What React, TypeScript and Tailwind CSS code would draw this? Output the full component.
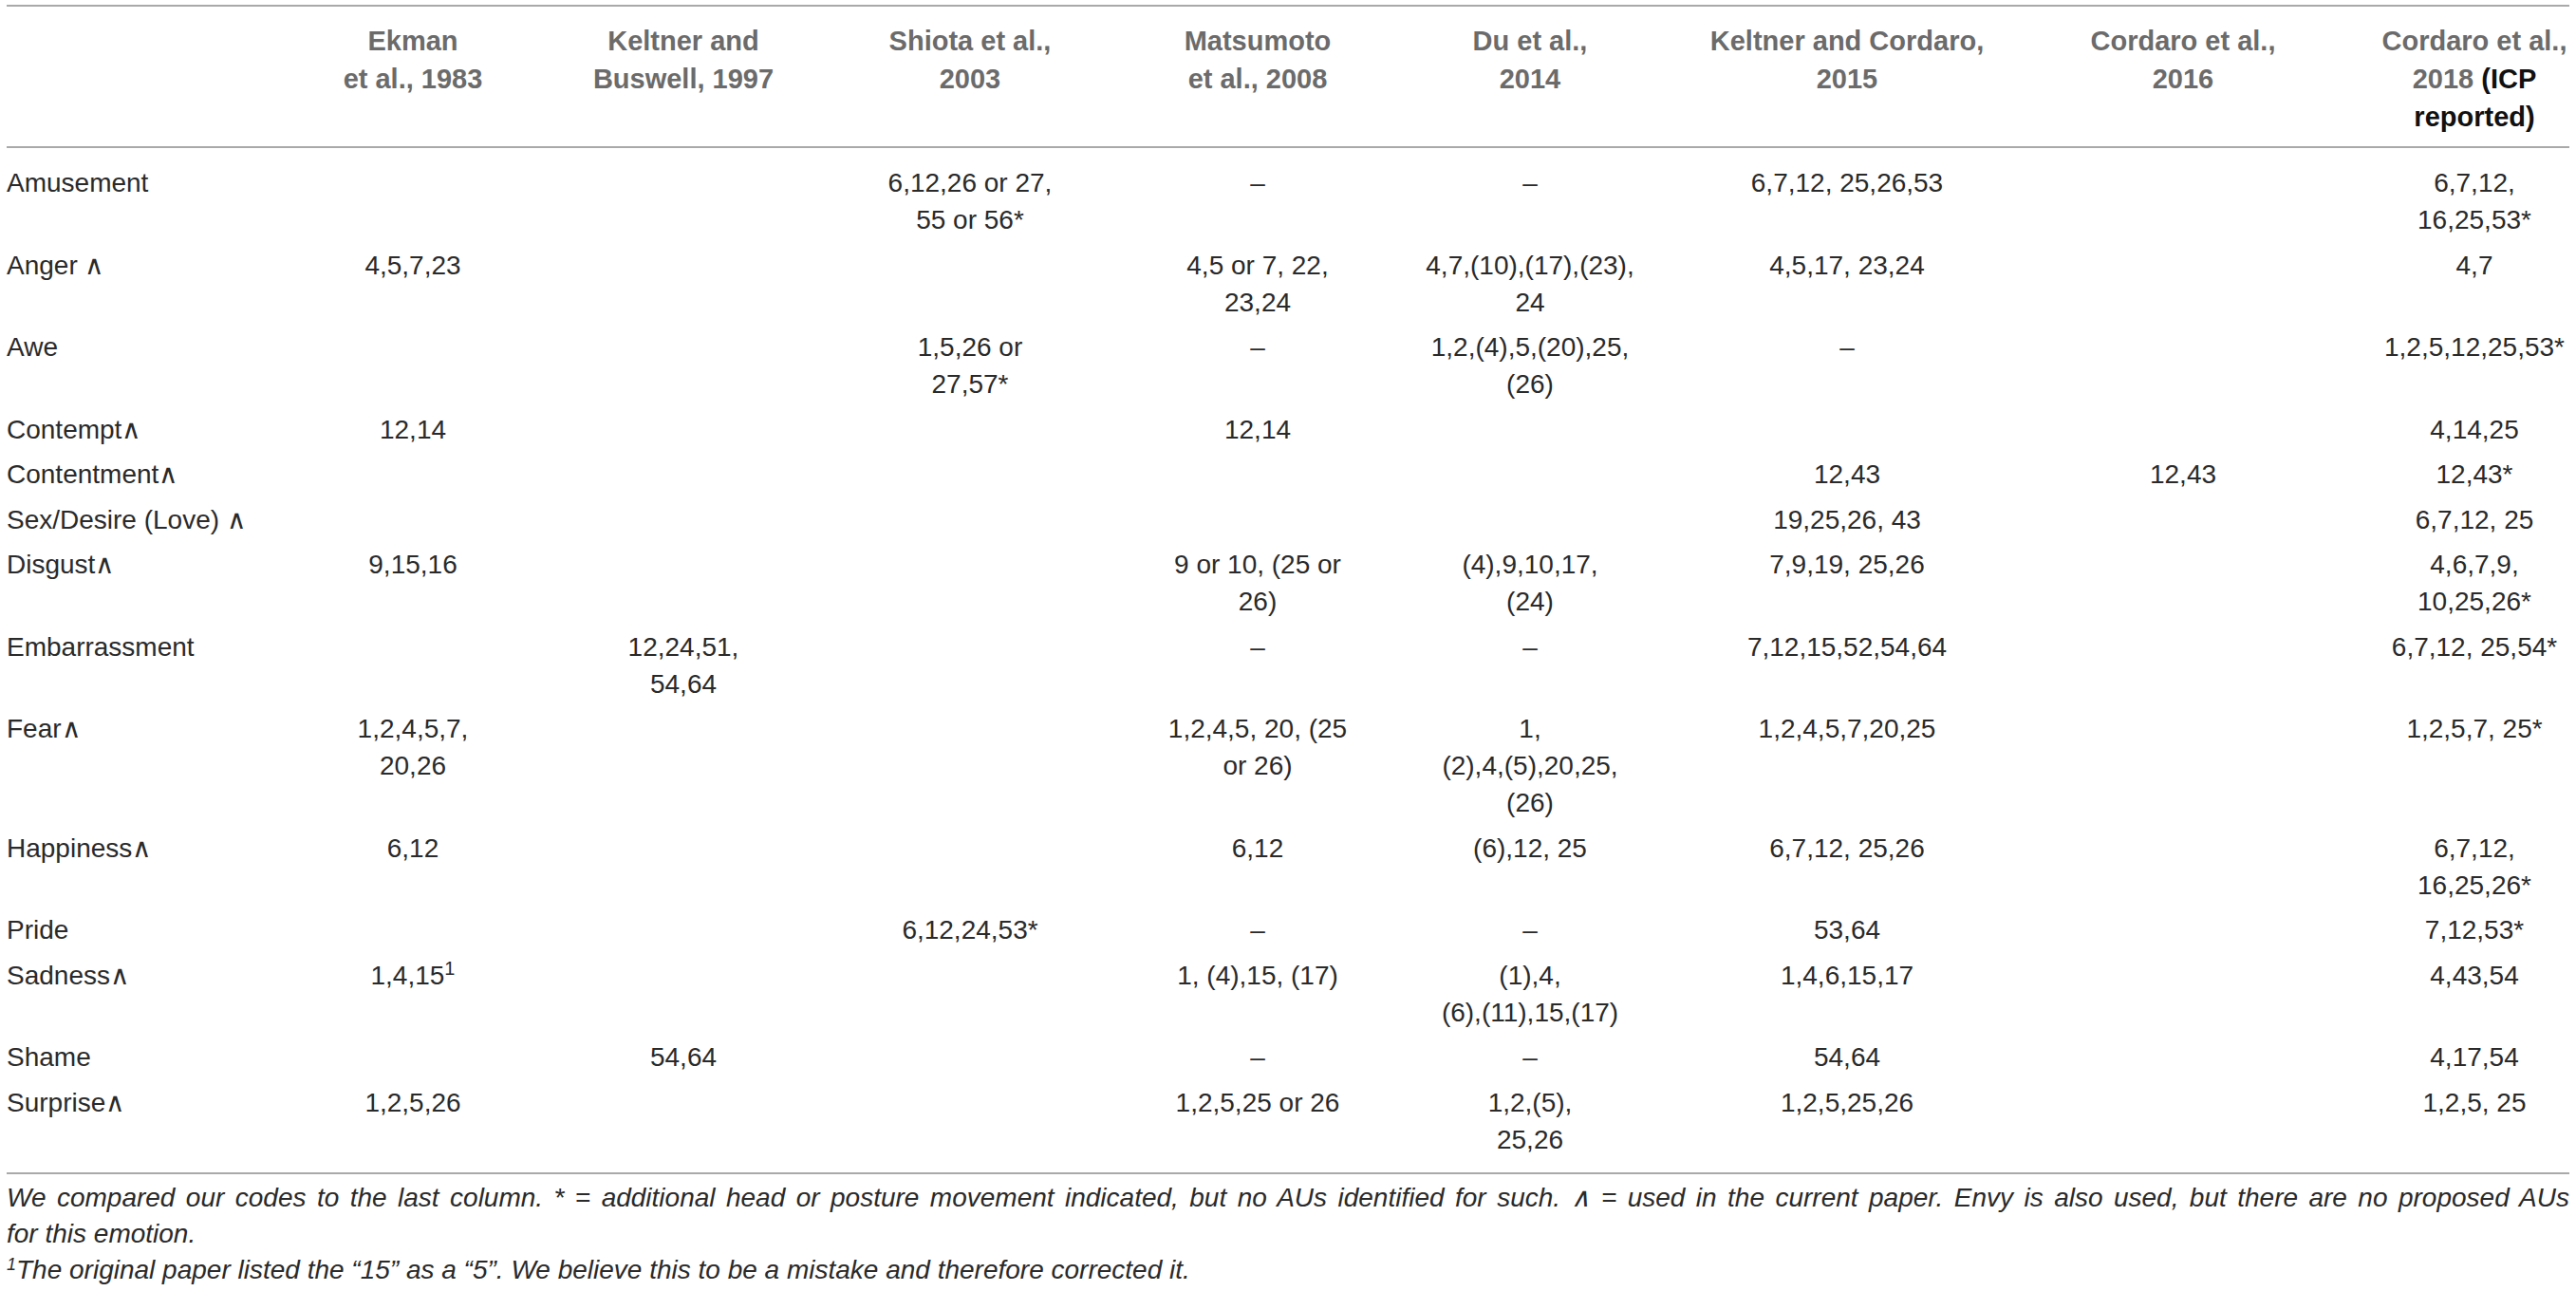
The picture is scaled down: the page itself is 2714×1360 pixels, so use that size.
import React from "react";

const grid =
  "grid grid-cols-[242px_372px_198px_406px_200px_374px_294px_414px_200px]";

const headers: React.ReactNode[][] = [
  ["Ekman", "et al., 1983"],
  ["Keltner and", "Buswell, 1997"],
  ["Shiota et al.,", "2003"],
  ["Matsumoto", "et al., 2008"],
  ["Du et al.,", "2014"],
  ["Keltner and Cordaro,", "2015"],
  ["Cordaro et al.,", "2016"],
  [
    "Cordaro et al.,",
    <>
      2018 <span className="text-[#111]">(ICP</span>
    </>,
    <span className="text-[#111]">reported)</span>,
  ],
];

// "\n" breaks a cell into lines, "^1" marks a superscript
const rows: { label: string; cells: string[] }[] = [
  {
    label: "Amusement",
    cells: ["", "", "6,12,26 or 27,\n55 or 56*", "–", "–", "6,7,12, 25,26,53", "", "6,7,12,\n16,25,53*"],
  },
  {
    label: "Anger ∧",
    cells: ["4,5,7,23", "", "", "4,5 or 7, 22,\n23,24", "4,7,(10),(17),(23),\n24", "4,5,17, 23,24", "", "4,7"],
  },
  {
    label: "Awe",
    cells: ["", "", "1,5,26 or\n27,57*", "–", "1,2,(4),5,(20),25,\n(26)", "–", "", "1,2,5,12,25,53*"],
  },
  { label: "Contempt∧", cells: ["12,14", "", "", "12,14", "", "", "", "4,14,25"] },
  { label: "Contentment∧", cells: ["", "", "", "", "", "12,43", "12,43", "12,43*"] },
  { label: "Sex/Desire (Love) ∧", cells: ["", "", "", "", "", "19,25,26, 43", "", "6,7,12, 25"] },
  {
    label: "Disgust∧",
    cells: ["9,15,16", "", "", "9 or 10, (25 or\n26)", "(4),9,10,17,\n(24)", "7,9,19, 25,26", "", "4,6,7,9,\n10,25,26*"],
  },
  {
    label: "Embarrassment",
    cells: ["", "12,24,51,\n54,64", "", "–", "–", "7,12,15,52,54,64", "", "6,7,12, 25,54*"],
  },
  {
    label: "Fear∧",
    cells: ["1,2,4,5,7,\n20,26", "", "", "1,2,4,5, 20, (25\nor 26)", "1,\n(2),4,(5),20,25,\n(26)", "1,2,4,5,7,20,25", "", "1,2,5,7, 25*"],
  },
  {
    label: "Happiness∧",
    cells: ["6,12", "", "", "6,12", "(6),12, 25", "6,7,12, 25,26", "", "6,7,12,\n16,25,26*"],
  },
  { label: "Pride", cells: ["", "", "6,12,24,53*", "–", "–", "53,64", "", "7,12,53*"] },
  {
    label: "Sadness∧",
    cells: ["1,4,15^1", "", "", "1, (4),15, (17)", "(1),4,\n(6),(11),15,(17)", "1,4,6,15,17", "", "4,43,54"],
  },
  { label: "Shame", cells: ["", "54,64", "", "–", "–", "54,64", "", "4,17,54"] },
  {
    label: "Surprise∧",
    cells: ["1,2,5,26", "", "", "1,2,5,25 or 26", "1,2,(5),\n25,26", "1,2,5,25,26", "", "1,2,5, 25"],
  },
];

function Line({ text }: { text: string }) {
  if (text.endsWith("^1")) {
    return (
      <span className="whitespace-nowrap">
        {text.slice(0, -2)}
        <sup className="text-[20px]">1</sup>
      </span>
    );
  }
  return <span className="whitespace-nowrap">{text}</span>;
}

export default function App() {
  return (
    <div className="min-h-screen bg-white px-[7px] pt-[5px] font-['Liberation_Sans',Arial,sans-serif] text-[#2a2a2a]">
      <div className="border-t-2 border-[#a9a9a9]">
        {/* header */}
        <div
          className={`${grid} border-b-2 border-[#a9a9a9] pt-[16px] pb-[11px] text-[29px] font-bold leading-[40px] text-[#6b6b6b]`}
        >
          <div />
          {headers.map((lines, i) => (
            <div key={i} className="flex flex-col items-center">
              {lines.map((l, j) => (
                <span key={j} className="whitespace-nowrap">
                  {l}
                </span>
              ))}
            </div>
          ))}
        </div>

        {/* body */}
        <div className="border-b-2 border-[#a9a9a9] pt-[13px] pb-[11px] text-[28px] leading-[39px]">
          {rows.map((row) => (
            <div key={row.label} className={`${grid} py-[4.25px]`}>
              <div className="whitespace-nowrap">{row.label}</div>
              {row.cells.map((c, i) => (
                <div key={i} className="flex flex-col items-center">
                  {c
                    ? c.split("\n").map((l, j) => <Line key={j} text={l} />)
                    : null}
                </div>
              ))}
            </div>
          ))}
        </div>
      </div>

      {/* footnotes */}
      <div className="pt-[6px] text-[28px] italic leading-[38px] text-[#2a2a2a]">
        <p className="whitespace-nowrap text-justify [text-align-last:justify]">
          We compared our codes to the last column. * = additional head or
          posture movement indicated, but no AUs identified for such. ∧ = used
          in the current paper. Envy is also used, but there are no proposed
          AUs
        </p>
        <p>for this emotion.</p>
        <p>
          <sup className="text-[18px]">1</sup>The original paper listed the
          “15” as a “5”. We believe this to be a mistake and therefore
          corrected it.
        </p>
      </div>
    </div>
  );
}
